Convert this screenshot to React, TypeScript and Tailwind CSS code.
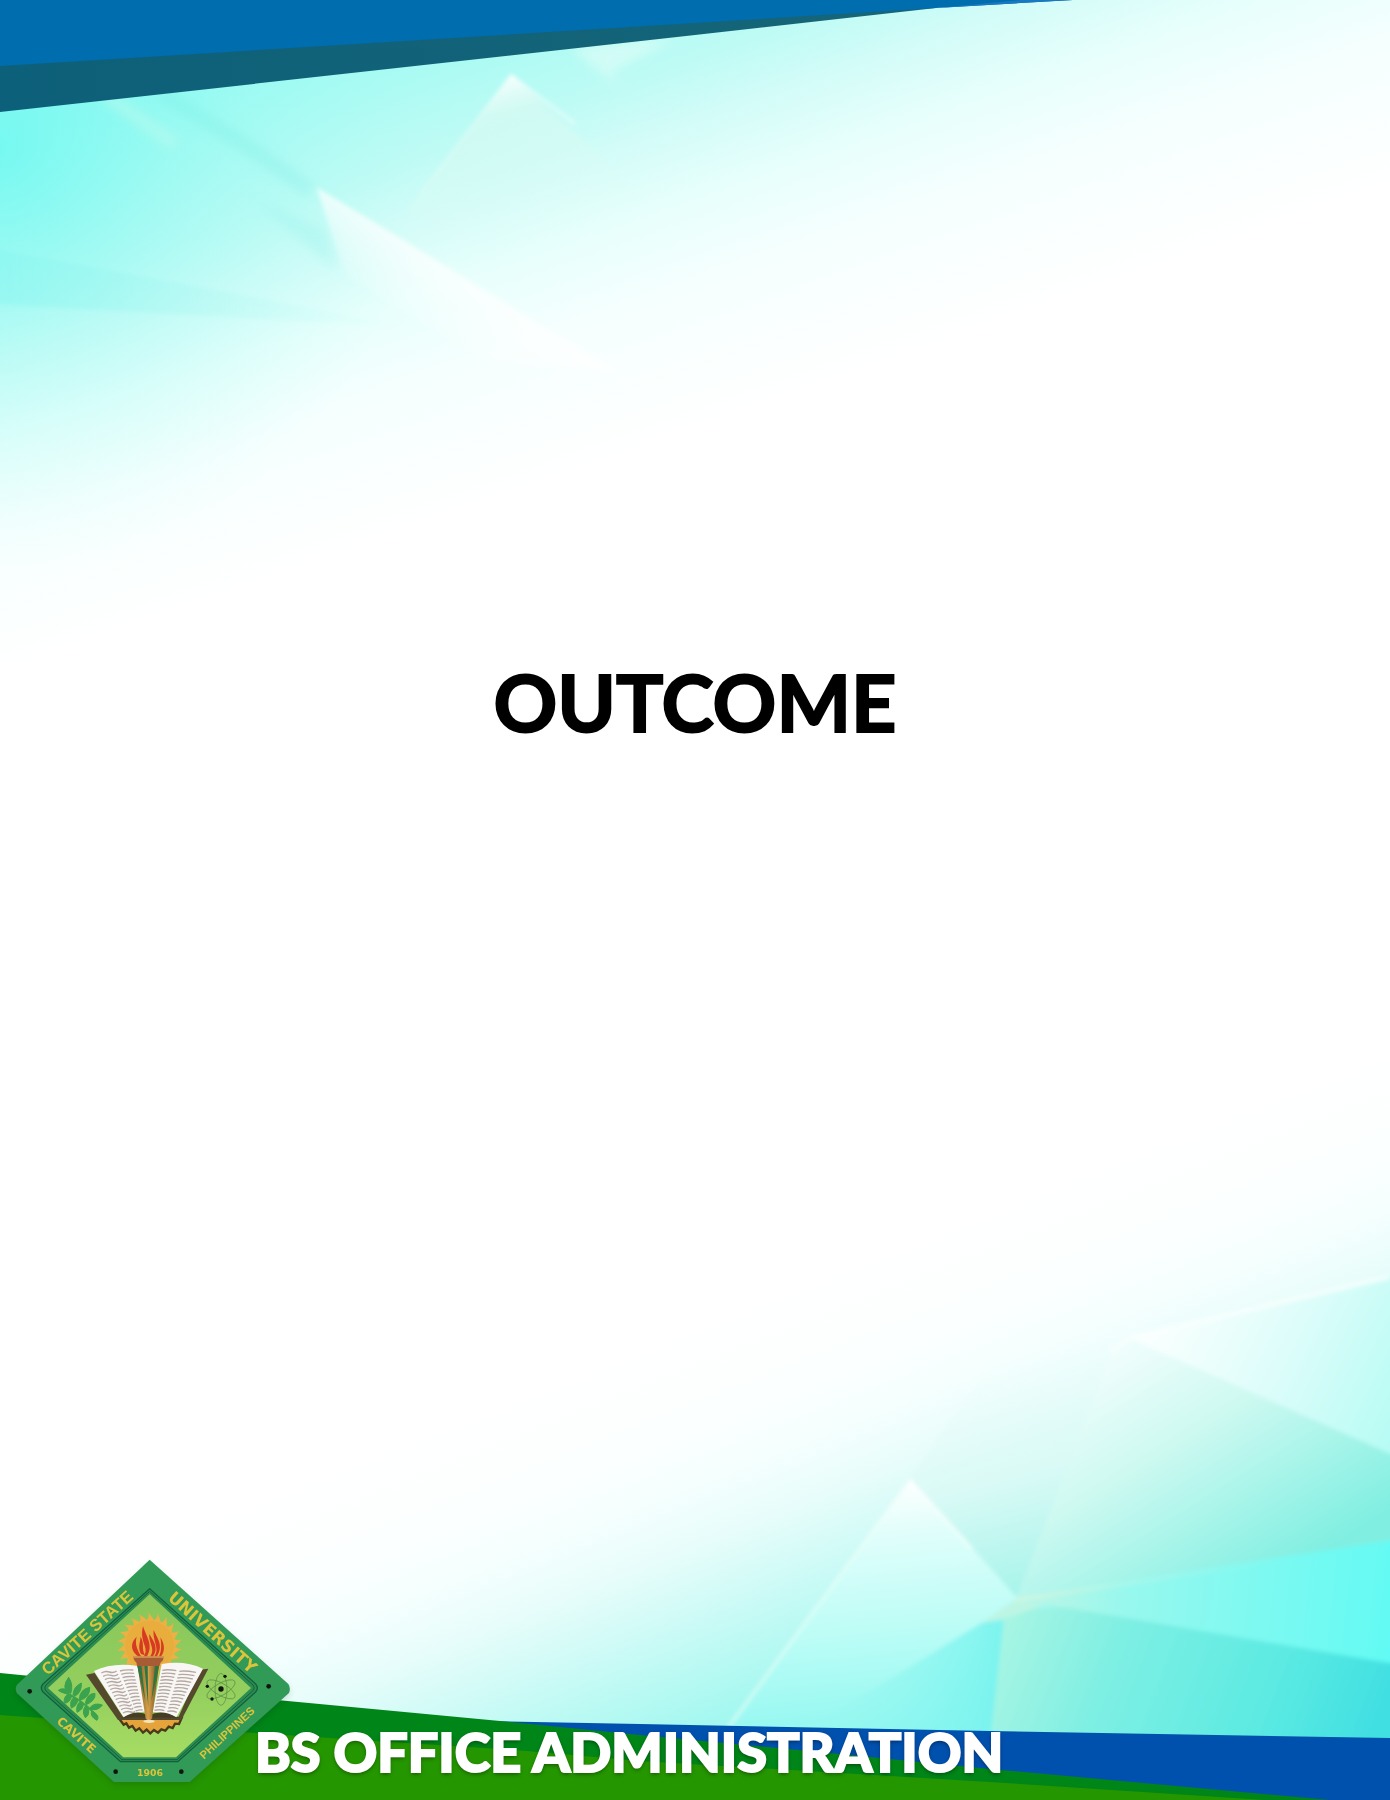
const SUN_RAYS = Array.from({ length: 22 }, (_, i) => {
  const a = (i * 2 * Math.PI) / 22;
  const b = a + 0.2;
  const c = a - 0.14;
  const at = (r: number, t: number) =>
    `${(450 + r * Math.sin(t)).toFixed(1)},${(312 - r * Math.cos(t)).toFixed(1)}`;
  return `M${at(74, c)} Q${at(84, a)} ${at(99, a - 0.04)} Q${at(84, a + 0.1)} ${at(74, b)} Z`;
}).join(' ');

const LEFT_LINES = Array.from({ length: 13 }, (_, i) => {
  const y = 392 + i * 10;
  const x = 305 + i * 5.4;
  return `M${x} ${y + 3} q12 -7 24 -3 t${Math.max(8, 22 - i)} -3 M${x + 56 - i * 1.5} ${y - 3} q14 -5 ${40 - i * 1.6} -3`;
}).join(' ');

const RIGHT_LINES = Array.from({ length: 13 }, (_, i) => {
  const y = 390 + i * 10;
  const x = 488 - i * 2;
  return `M${x} ${y - 3} q16 -4 ${42 - i} 1 M${x + 51 - i} ${y} q16 -3 ${50 - i * 1.8} 3`;
}).join(' ');

function Backdrop() {
  return (
    <svg
      className="absolute inset-0 -z-10 h-full w-full"
      viewBox="0 0 1390 1800"
      preserveAspectRatio="none"
      aria-hidden="true"
    >
      <defs>
        <linearGradient id="top" gradientUnits="userSpaceOnUse" x1="0" y1="0" x2="211" y2="602">
          <stop offset="0.18" stopColor="#94faf2" />
          <stop offset="0.31" stopColor="#a8fbf3" />
          <stop offset="0.45" stopColor="#bffbf5" />
          <stop offset="0.54" stopColor="#d3fcf8" />
          <stop offset="0.65" stopColor="#e7fffc" />
          <stop offset="0.78" stopColor="#f5fffe" />
          <stop offset="1" stopColor="#ffffff" />
        </linearGradient>
        <radialGradient id="corner" gradientUnits="userSpaceOnUse" cx="0" cy="150" r="420">
          <stop offset="0" stopColor="#66f8f0" stopOpacity="0.7" />
          <stop offset="0.45" stopColor="#84f9f1" stopOpacity="0.3" />
          <stop offset="1" stopColor="#aafaf3" stopOpacity="0" />
        </radialGradient>
        <linearGradient id="band" gradientUnits="userSpaceOnUse" x1="0" y1="0" x2="420" y2="0">
          <stop offset="0" stopColor="#88f5ef" stopOpacity="0.5" />
          <stop offset="1" stopColor="#b5f5ee" stopOpacity="0" />
        </linearGradient>
        <linearGradient id="peakA" gradientUnits="userSpaceOnUse" x1="500" y1="74" x2="540" y2="230">
          <stop offset="0" stopColor="#ffffff" stopOpacity="0.95" />
          <stop offset="0.25" stopColor="#d8faf2" stopOpacity="0.7" />
          <stop offset="1" stopColor="#e0fbf5" stopOpacity="0" />
        </linearGradient>
        <linearGradient id="peakB" gradientUnits="userSpaceOnUse" x1="430" y1="262" x2="392" y2="320">
          <stop offset="0" stopColor="#ffffff" stopOpacity="0.7" />
          <stop offset="1" stopColor="#ffffff" stopOpacity="0" />
        </linearGradient>
        <linearGradient id="bottom" gradientUnits="userSpaceOnUse" x1="548" y1="1376" x2="688" y2="1730">
          <stop offset="0" stopColor="#ffffff" />
          <stop offset="0.25" stopColor="#fcffff" />
          <stop offset="0.4" stopColor="#f5fffe" />
          <stop offset="0.55" stopColor="#e8fdfb" />
          <stop offset="0.7" stopColor="#d2fbf7" />
          <stop offset="1" stopColor="#a4f8f0" />
        </linearGradient>
        <linearGradient id="facetA" gradientUnits="userSpaceOnUse" x1="1150" y1="1330" x2="1390" y2="1450">
          <stop offset="0" stopColor="#fafffe" />
          <stop offset="0.5" stopColor="#dcfdfa" />
          <stop offset="1" stopColor="#b6fcf4" />
        </linearGradient>
        <linearGradient id="facetB" gradientUnits="userSpaceOnUse" x1="1110" y1="1350" x2="1260" y2="1590">
          <stop offset="0" stopColor="#f2fefc" />
          <stop offset="0.4" stopColor="#cdf9f1" />
          <stop offset="1" stopColor="#80efe1" />
        </linearGradient>
        <linearGradient id="facetC" gradientUnits="userSpaceOnUse" x1="950" y1="1370" x2="1010" y2="1600">
          <stop offset="0" stopColor="#effdfb" stopOpacity="0" />
          <stop offset="0.5" stopColor="#dafaf6" />
          <stop offset="1" stopColor="#a6f4ea" />
        </linearGradient>
        <linearGradient id="facetD" gradientUnits="userSpaceOnUse" x1="905" y1="1479" x2="930" y2="1730">
          <stop offset="0" stopColor="#ffffff" />
          <stop offset="0.2" stopColor="#e2fefb" />
          <stop offset="0.6" stopColor="#bbfdf6" />
          <stop offset="1" stopColor="#8ff7f0" />
        </linearGradient>
        <linearGradient id="facetE" gradientUnits="userSpaceOnUse" x1="840" y1="1660" x2="1000" y2="1690">
          <stop offset="0" stopColor="#98f8f0" stopOpacity="0.3" />
          <stop offset="1" stopColor="#7af3ef" />
        </linearGradient>
        <linearGradient id="facetF" gradientUnits="userSpaceOnUse" x1="1010" y1="1600" x2="1390" y2="1640">
          <stop offset="0" stopColor="#c4f5e2" />
          <stop offset="0.3" stopColor="#98f8ee" />
          <stop offset="1" stopColor="#62faf4" />
        </linearGradient>
        <linearGradient id="facetG" gradientUnits="userSpaceOnUse" x1="1010" y1="1610" x2="1370" y2="1750">
          <stop offset="0" stopColor="#a8f5e3" />
          <stop offset="0.3" stopColor="#7eefe3" />
          <stop offset="0.7" stopColor="#5ceae2" />
          <stop offset="1" stopColor="#40dfe2" />
        </linearGradient>
        <linearGradient id="ridge" gradientUnits="userSpaceOnUse" x1="1016" y1="0" x2="1300" y2="0">
          <stop offset="0" stopColor="#d3f6e2" />
          <stop offset="1" stopColor="#9cf8ec" stopOpacity="0" />
        </linearGradient>
        <linearGradient id="deep" gradientUnits="userSpaceOnUse" x1="0" y1="0" x2="1390" y2="0">
          <stop offset="0" stopColor="#0d6079" />
          <stop offset="1" stopColor="#1b6878" />
        </linearGradient>
        <filter id="soft" x="-20%" y="-20%" width="140%" height="140%">
          <feGaussianBlur stdDeviation="2" />
        </filter>
        <filter id="haze" x="-50%" y="-50%" width="200%" height="200%">
          <feGaussianBlur stdDeviation="6" />
        </filter>
      </defs>

      <rect width="1390" height="1800" fill="#fff" />
      <rect width="1390" height="760" fill="url(#top)" />
      <rect width="440" height="600" fill="url(#corner)" />
      <g filter="url(#soft)">
        <path d="M-5 249 L420 328 L-5 304Z" fill="url(#band)" />
        <path d="M511 74 L405 213 L560 270 L660 210Z" fill="url(#peakA)" />
        <path d="M511 75 L575 124" stroke="#fff" strokeWidth="3" opacity="0.5" />
        <path d="M511 75 L420 194" stroke="#f0fef8" strokeWidth="2" opacity="0.4" />
        <path d="M317 189 L620 372 L480 360 L345 275Z" fill="url(#peakB)" />
        <path d="M317 189 L560 336" stroke="#f4fffb" strokeWidth="3" opacity="0.6" />
      </g>
      <g filter="url(#haze)">
        <path d="M160 92 L250 148 L310 190" fill="none" stroke="#74eae0" strokeWidth="12" opacity="0.3" />
        <path d="M105 94 L176 145" stroke="#c9fbea" strokeWidth="12" opacity="0.45" />
        <path d="M255 200 L338 272 L325 230Z" fill="#8ff2ea" opacity="0.3" />
        <path d="M570 48 L680 36 L610 72 L625 90Z" fill="#e4fdf6" opacity="0.6" />
      </g>

      <path d="M0 900 H1390 V1800 H0Z" fill="url(#bottom)" />
      <g filter="url(#soft)">
        <path d="M1129 1337 L1395 1275 V1456 L1160 1352Z" fill="url(#facetA)" />
        <path d="M910 1479 L1005 1340 L1112 1352 L1018 1598Z" fill="url(#facetC)" />
        <path d="M1112 1352 L1160 1352 L1395 1456 V1542 L1016 1599Z" fill="url(#facetB)" />
        <path d="M910 1479 L1018 1599 L983 1624 L1005 1740 L720 1740Z" fill="url(#facetD)" />
        <path d="M983 1622 L1006 1620 L990 1740 H770 L872 1690Z" fill="url(#facetE)" />
        <path d="M1016 1597 L1395 1540 V1666 L1063 1607Z" fill="url(#facetF)" />
        <path d="M1005 1610 L1063 1607 L1395 1664 V1760 H988Z" fill="url(#facetG)" />
        <path d="M981 1623 L1016 1599 L1045 1604 L1010 1617Z" fill="#bdf5e4" />
        <path d="M1016 1600 L1390 1544" stroke="url(#ridge)" strokeWidth="3" />
        <path d="M910 1480 L728 1728" stroke="#f0fff8" strokeWidth="3" opacity="0.6" />
        <path d="M910 1480 L972 1549" stroke="#fff" strokeWidth="3" opacity="0.6" />
        <path d="M1110 1352 L1129 1338 L1390 1277" fill="none" stroke="#fbfffe" strokeWidth="4" opacity="0.8" />
      </g>

      <path d="M0 0 H900 L936 8 L695 35 L0 112Z" fill="url(#deep)" />
      <path d="M0 0 H1073 L936 8 L695 23 L0 66Z" fill="#006dae" />
      <path d="M1073 0 L936 8 L1020 0Z" fill="#1878c0" />

      <path d="M480 1721 L640 1724 L990 1731 L1390 1738 V1800 H480Z" fill="#0050ad" />
      <path d="M0 1673 L277 1700 L500 1721 L640 1735 L840 1754 L990 1769 L1330 1800 H0Z" fill="#008518" />
      <path d="M0 1715 L240 1732 L527 1751 L640 1761 L990 1782 L1265 1800 H0Z" fill="#249600" />
    </svg>
  );
}

function Seal() {
  return (
    <svg
      className="w-[280px] shrink-0 drop-shadow-md"
      viewBox="40 50 840 690"
      role="img"
      aria-label="Cavite State University seal"
    >
      <defs>
        <linearGradient id="field" x1="0" y1="0" x2="0" y2="1">
          <stop offset="0" stopColor="#88c65b" />
          <stop offset="0.6" stopColor="#94cf5e" />
          <stop offset="1" stopColor="#a6dc63" />
        </linearGradient>
        <linearGradient id="torch" x1="0" y1="0" x2="1" y2="0">
          <stop offset="0" stopColor="#795425" />
          <stop offset="0.5" stopColor="#d6a04a" />
          <stop offset="1" stopColor="#6d4620" />
        </linearGradient>
      </defs>
      <path d="M450 55 L866 428 Q874 440 868 455 L570 722 H343 L52 456 Q44 442 52 430Z" fill="#319a57" />
      <path d="M450 142 L768 428 Q778 440 768 452 L534 661 H363 L130 452 Q120 440 130 428Z" fill="#2b8d50" stroke="#12613e" strokeWidth="4" strokeLinejoin="round" />
      <path d="M450 150 L760 431 Q768 440 760 448 L532 655 H367 L139 449 Q131 440 139 431Z" fill="none" stroke="#175f3d" strokeWidth="3" strokeLinejoin="round" />
      <path d="M450 159 L754 440 L529 648 H371 L145 440Z" fill="url(#field)" />

      <circle cx="450" cy="312" r="77" fill="#e9ad3e" />
      <path d={SUN_RAYS} fill="#ecb044" />
      <g fill="#d63a22">
        <path d="M416 345 C388 325 396 300 411 286 C405 308 412 322 424 345Z" />
        <path d="M433 345 C450 317 418 304 430 254 C440 286 462 312 442 345Z" />
        <path d="M424 338 C412 315 424 300 422 286 C436 305 424 320 436 342Z" />
        <path d="M452 345 C468 322 446 305 449 278 C462 300 478 320 460 345Z" />
        <path d="M464 345 C482 322 458 300 462 266 C474 294 492 312 472 345Z" />
        <path d="M478 345 C486 330 486 310 482 288 C498 312 494 334 484 345Z" />
      </g>

      <path d="M357 530 L372 550 L380 546 L388 559 L398 554 L408 568 L419 561 L430 574 L441 565 L452 576 L463 566 L475 574 L485 564 L497 568 L507 556 L519 560 L526 547 L538 548 L546 530Z" fill="#e5a33c" stroke="#4a3a1c" strokeWidth="7" />
      <path d="M259 400 L285 395 L372 530 L440 522 L460 522 L535 530 L600 385 L626 382 L545 536 L355 536Z" fill="#54492c" />
      <path d="M283 389 Q340 362 414 374 L440 510 Q410 512 372 528Z" fill="#f8f7f6" />
      <path d="M610 382 Q555 356 486 368 L459 512 Q500 512 530 528Z" fill="#f8f7f6" />
      <path d={LEFT_LINES} fill="none" stroke="#b5a8a1" strokeWidth="4" />
      <path d={RIGHT_LINES} fill="none" stroke="#b5a8a1" strokeWidth="4" />
      <path d="M372 528 Q410 502 447 522 Q490 502 532 529Z" fill="#463d25" />

      <path d="M413 371 H478 L457 532 Q447 541 438 532Z" fill="url(#torch)" />
      <path d="M413 374 H425 L437 480Z M434 374 H444 L446 500Z M466 374 H478 L455 480Z" fill="#2c7741" />
      <path d="M400 346 H493 L489 358 Q480 363 480 374 H412 Q411 362 404 357Z" fill="#a75c34" />
      <path d="M400 348 H493" stroke="#c98b5c" strokeWidth="4" />
      <ellipse cx="448" cy="540" rx="17" ry="5" fill="#f3e3bd" />

      <path
        d="M176 447 Q190 436 210 450 Q198 462 176 447 M205 455 Q185 438 207 408 Q222 430 213 457 M220 462 Q220 437 245 425 Q247 453 225 465 M239 474 Q240 444 270 438 Q272 468 241 477 M257 486 Q262 456 286 456 Q289 477 260 490 M270 500 Q284 482 308 491 Q296 509 273 504 M207 457 Q190 467 194 486 Q213 484 216 462 M224 467 Q208 480 215 500 Q233 493 235 473 M242 480 Q228 492 232 513 Q252 504 251 486 M258 493 Q245 510 257 529 Q272 520 265 499 M276 508 Q270 526 292 537 Q302 525 280 510"
        fill="#3ba24d"
        stroke="#3ba24d"
        strokeWidth="3"
      />
      <path d="M180 448 Q237 466 288 520" fill="none" stroke="#3ba24d" strokeWidth="5" />
      <g fill="none" stroke="#588b43" strokeWidth="2">
        <ellipse cx="664" cy="444" rx="18" ry="48" />
        <ellipse cx="664" cy="444" rx="18" ry="48" transform="rotate(60 664 444)" />
        <ellipse cx="664" cy="444" rx="18" ry="48" transform="rotate(120 664 444)" />
      </g>
      <g fill="#10170f">
        <circle cx="664" cy="443" r="8" />
        <circle cx="676" cy="405" r="5" />
        <circle cx="623" cy="435" r="5" />
        <circle cx="637" cy="473" r="5" />
        <circle cx="90" cy="450" r="7" />
        <circle cx="807" cy="435" r="7" />
        <circle cx="348" cy="691" r="7" />
        <circle cx="545" cy="691" r="7" />
      </g>

      <g fill="#dcc53a" fontWeight="700" textAnchor="middle">
        <text transform="translate(274 287) rotate(-42)" fontSize="50" fontFamily="'Liberation Sans', sans-serif">CAVITE STATE</text>
        <text transform="translate(627 286) rotate(42)" fontSize="50" fontFamily="'DejaVu Sans', sans-serif">UNIVERSITY</text>
        <text transform="translate(222 590) rotate(42)" fontSize="36" fontFamily="'DejaVu Sans', sans-serif">CAVITE</text>
        <text transform="translate(690 583) rotate(-43)" fontSize="34" fontFamily="'Liberation Sans', sans-serif">PHILIPPINES</text>
        <text x="451" y="703" fontSize="28" fontFamily="'DejaVu Sans', sans-serif">1906</text>
      </g>
    </svg>
  );
}

export default function App() {
  return (
    <div className="relative isolate flex min-h-screen flex-col overflow-hidden font-['Lato',sans-serif]">
      <Backdrop />
      <main className="flex flex-1 flex-col items-center pt-[652px]">
        <h1 className="text-[79px] leading-[100px] font-bold text-black [-webkit-text-stroke:2px_black]">OUTCOME</h1>
      </main>
      <footer className="flex items-end pb-3 pl-[13px]">
        <Seal />
        <p className="z-10 mb-1 -ml-[38px] text-[54px] leading-[64px] font-black whitespace-nowrap text-white [-webkit-text-stroke:2px_white] [text-shadow:0_2px_4px_rgba(0,0,0,0.45)]">
          BS OFFICE ADMINISTRATION
        </p>
      </footer>
    </div>
  );
}
